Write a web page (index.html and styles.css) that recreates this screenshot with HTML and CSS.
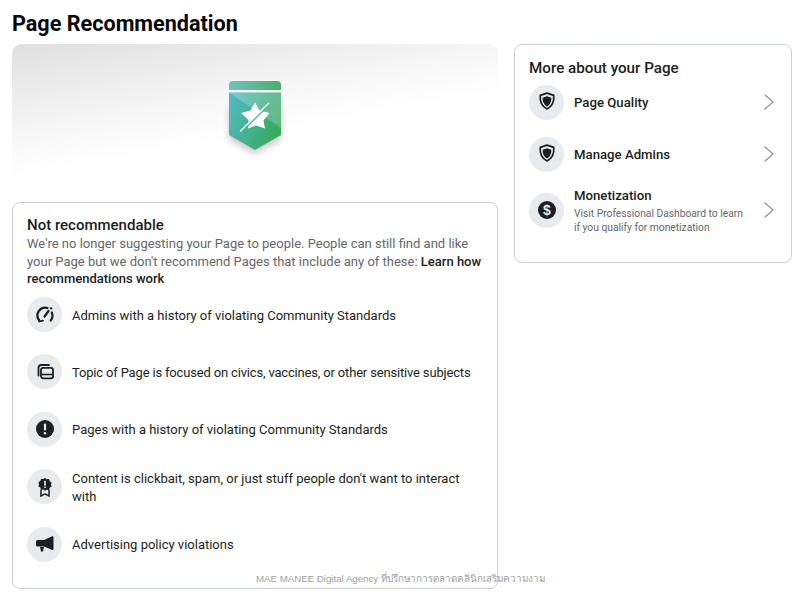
FILE: index.html
```html
<!DOCTYPE html>
<html lang="en">
<head>
<meta charset="utf-8">
<title>Page Recommendation</title>
<link rel="stylesheet" href="styles.css">
</head>
<body>
<div class="layout">
  <main class="main">
    <h1 class="title">Page Recommendation</h1>
    <div class="hero">
      <svg class="badge" width="70" height="90" viewBox="0 0 70 90">
        <defs>
          <linearGradient id="g1" x1="0" y1="0" x2="1" y2="0"><stop offset="0" stop-color="#72c2bd"/><stop offset="1" stop-color="#48ae6c"/></linearGradient>
          <linearGradient id="g2" x1="0" y1="0.3" x2="1" y2="0.7"><stop offset="0" stop-color="#4fb9bd"/><stop offset="1" stop-color="#35a957"/></linearGradient>
          <filter id="s" x="-30%" y="-20%" width="160%" height="150%"><feGaussianBlur stdDeviation="3.500"/></filter>
        </defs>
        <path d="M9 30H61V64L35 78L9 64Z" fill="#000" opacity=".2" filter="url(#s)" transform="translate(0 4)"/>
        <path d="M9 13a4 4 0 0 1 4-4H57a4 4 0 0 1 4 4V18H9Z" fill="url(#g1)"/>
        <path d="M9 20.500H61V63L35 78L9 63Z" fill="url(#g2)"/>
        <path d="M9 20.500H61V56Z" fill="#fff" opacity=".2"/>
        <path d="M35 30.500L39.500 38.500 49.500 41 43.500 48.500 45 56.500 36 53.500 28 56.500 28.500 48 21 41 30.500 38.500Z" fill="#fff"/>
        <path d="M21 60.500L50 32" stroke="#48b29c" stroke-width="1.500"/>
        <path d="M20 59.500L49 31" stroke="#fff" stroke-width="1.300"/>
      </svg>
    </div>
    <section class="card status">
      <h2 class="status-title">Not recommendable</h2>
      <p class="status-text">We're no longer suggesting your Page to people. People can still find and like your Page but we don't recommend Pages that include any of these: <b class="status-link">Learn how recommendations work</b></p>
      <ul class="reasons">
        <li class="reason">
          <span class="circle"><svg width="20" height="20" viewBox="0 0 20 20" fill="none" stroke="#1c1e21" stroke-width="2.200" stroke-linecap="round"><path d="M4.300 15.500A7.800 7.800 0 0 1 12.500 3"/><path d="M16.800 7.500A7.800 7.800 0 0 1 15.700 15.500"/><path d="M9.500 11.500L13.500 6"/><path d="M16 3.200l.2.200"/><path d="M2.800 12.300L4.400 16.400 8 15.600" stroke-width="1.800"/></svg></span>
          <span class="reason-text">Admins with a history of violating Community Standards</span>
        </li>
        <li class="reason">
          <span class="circle"><svg width="20" height="20" viewBox="0 0 20 20" fill="none" stroke="#1c1e21" stroke-width="1.800"><rect x="6" y="5.800" width="12" height="10.500" rx="2"/><path d="M6 12.500H18" stroke-width="1.600"/><path d="M3.500 13.500V6A3 3 0 0 1 6.500 3H14" stroke-linecap="round"/></svg></span>
          <span class="reason-text reason-text-tight">Topic of Page is focused on civics, vaccines, or other sensitive subjects</span>
        </li>
        <li class="reason">
          <span class="circle"><svg width="20" height="20" viewBox="0 0 20 20"><circle cx="10" cy="10" r="9" fill="#1c1e21"/><rect x="8.900" y="4.500" width="2.200" height="7" rx="1.100" fill="#e9eaed"/><circle cx="10" cy="14.200" r="1.300" fill="#e9eaed"/></svg></span>
          <span class="reason-text">Pages with a history of violating Community Standards</span>
        </li>
        <li class="reason">
          <span class="circle"><svg width="20" height="20" viewBox="0 0 20 20"><path d="M10 1l1.800 1.300 2.200-.2.700 2.100 1.900 1.200-.7 2.100.7 2.100-1.900 1.200-.7 2.100-2.200-.2L10 13.800 8.200 12.500l-2.200.2-.7-2.100-1.900-1.200.7-2.100-.7-2.100 1.900-1.200.7-2.100 2.200.2z" fill="#1c1e21"/><rect x="9.200" y="3.800" width="1.600" height="4.800" fill="#e9eaed"/><rect x="9.200" y="9.500" width="1.600" height="1.600" fill="#e9eaed"/><path d="M6 12.500V19L10 16.800 14 19V12.500" fill="none" stroke="#1c1e21" stroke-width="1.500"/></svg></span>
          <span class="reason-text">Content is clickbait, spam, or just stuff people don't want to interact with</span>
        </li>
        <li class="reason">
          <span class="circle"><svg width="20" height="20" viewBox="0 0 20 20" fill="#1c1e21"><path d="M1 7.500a1.500 1.500 0 0 1 1.500-1.500H9l7.800-3.600A1 1 0 0 1 18.500 3.200V15a1 1 0 0 1-1.700.8L9 12.500H2.500A1.500 1.500 0 0 1 1 11Z"/><path d="M5 13H9L8 17.500H6Z"/></svg></span>
          <span class="reason-text">Advertising policy violations</span>
        </li>
      </ul>
    </section>
  </main>
  <aside class="card more">
    <h2 class="more-title">More about your Page</h2>
    <ul class="links">
      <li class="link">
        <span class="circle"><svg class="shield" width="18" height="18" viewBox="0 0 20 20"><path d="M10 1.300L17.500 3.800C18 9.500 16.500 15.800 10 18.800 3.500 15.800 2 9.500 2.500 3.800Z" fill="none" stroke="#1c1e21" stroke-width="1.900" stroke-linejoin="round"/><path d="M10 4.800L14.800 6.300C15 10 13.800 13.800 10 16 6.200 13.800 5 10 5.200 6.300Z" fill="#1c1e21"/></svg></span>
        <span class="link-body link-body-single"><span class="link-title">Page Quality</span></span>
        <svg class="chevron" width="12" height="18" viewBox="0 0 12 18" fill="none"><path d="M1.500 1.500L10 9 1.500 16.500" stroke="#8a8d91" stroke-width="1.100"/></svg>
      </li>
      <li class="link">
        <span class="circle"><svg class="shield" width="18" height="18" viewBox="0 0 20 20"><path d="M10 1.300L17.500 3.800C18 9.500 16.500 15.800 10 18.800 3.500 15.800 2 9.500 2.500 3.800Z" fill="none" stroke="#1c1e21" stroke-width="1.900" stroke-linejoin="round"/><path d="M10 4.800L14.800 6.300C15 10 13.800 13.800 10 16 6.200 13.800 5 10 5.200 6.300Z" fill="#1c1e21"/></svg></span>
        <span class="link-body link-body-single"><span class="link-title">Manage Admins</span></span>
        <svg class="chevron" width="12" height="18" viewBox="0 0 12 18" fill="none"><path d="M1.500 1.500L10 9 1.500 16.500" stroke="#8a8d91" stroke-width="1.100"/></svg>
      </li>
      <li class="link">
        <span class="circle"><svg width="20" height="20" viewBox="0 0 20 20"><circle cx="10" cy="10" r="9" fill="#1c1e21"/><text x="10" y="14.800" class="dollar">$</text></svg></span>
        <span class="link-body link-body-stacked"><span class="link-title">Monetization</span><span class="link-sub">Visit Professional Dashboard to learn<br>if you qualify for monetization</span></span>
        <svg class="chevron" width="12" height="18" viewBox="0 0 12 18" fill="none"><path d="M1.500 1.500L10 9 1.500 16.500" stroke="#8a8d91" stroke-width="1.100"/></svg>
      </li>
    </ul>
  </aside>
</div>
<div class="watermark">MAE MANEE Digital Agency <span class="watermark-thai">ที่ปรึกษาการตลาดคลินิกเสริมความงาม</span></div>
</body>
</html>
```

FILE: styles.css
```css
* { box-sizing: border-box; }
html, body { margin: 0; height: 100%; }
body {
  background: #fff;
  font-family: Roboto, "Noto Sans", sans-serif;
  color: #1c1e21;
  overflow: hidden;
  position: relative;
}
ul { list-style: none; margin: 0; padding: 0; }
h1, h2, p { margin: 0; }

.layout {
  display: flex;
  align-items: flex-start;
  gap: 16px;
  padding: 0 10px 0 12px;
}
.main { width: 486px; flex: none; }
.title {
  height: 44px;
  padding-top: 10px;
  font-size: 21.600px;
  line-height: 28px;
  font-weight: 700;
  color: #050505;
}
.hero {
  height: 146px;
  margin-bottom: 12px;
  border-radius: 10px 10px 0 0;
  background: linear-gradient(170deg, #dfdfe0 0%, #eeeeee 25%, #f8f8f8 42%, #ffffff 58%);
  display: flex;
  justify-content: center;
  padding-top: 28px;
}
.badge { display: block; margin-left: -1px; }
.card {
  border: 1px solid #ced0d4;
  border-radius: 8px;
  background: #fff;
}
.status { height: 387px; padding: 13px 14px 0; }
.status-title { font-size: 15px; line-height: 19px; font-weight: 500; color: #1c1e21; }
.status-text { font-size: 13px; line-height: 17.500px; color: #65676b; }
.status-link { font-weight: 500; color: #1c1e21; }
.reasons {
  display: grid;
  grid-auto-rows: 36px;
  row-gap: 21.400px;
  margin-top: 9px;
}
.reason { display: flex; align-items: center; gap: 10px; }
.reason-text { font-size: 13px; line-height: 18px; padding-top: 2px; color: #1c1e21; }
.reason-text-tight { letter-spacing: -0.170px; }
.circle {
  width: 35px;
  height: 35px;
  flex: none;
  border-radius: 50%;
  background: #e9eaed;
  display: flex;
  align-items: center;
  justify-content: center;
}
.shield { margin-bottom: 3px; }
.more { width: 278px; height: 219px; margin-top: 44px; padding: 13px 14px 0; flex: none; }
.more-title { font-size: 15.200px; line-height: 20px; font-weight: 500; color: #1c1e21; }
.links { display: grid; margin-top: -2px; }
.link { display: flex; align-items: center; gap: 10px; min-height: 52px; }
.link:last-child { min-height: 60px; }
.link-body { flex: 1; display: flex; flex-direction: column; min-width: 0; }
.link-body-single { padding-top: 2px; }
.link-body-stacked { gap: 2px; padding-top: 1px; }
.link-title { font-size: 13.200px; line-height: 18px; font-weight: 500; color: #1c1e21; }
.link-sub { font-size: 10.250px; line-height: 14px; color: #65676b; }
.chevron { flex: none; margin-right: 2px; }
.dollar { font-family: "Liberation Sans", sans-serif; font-size: 14px; font-weight: 700; fill: #e9eaed; text-anchor: middle; }
.watermark {
  position: absolute;
  left: 256px;
  top: 572px;
  font-family: "Liberation Sans", "Noto Sans", sans-serif;
  font-size: 9.700px;
  line-height: 14px;
  color: #a0a0a0;
  white-space: nowrap;
}
.watermark-thai { font-size: 9.850px; }
```
